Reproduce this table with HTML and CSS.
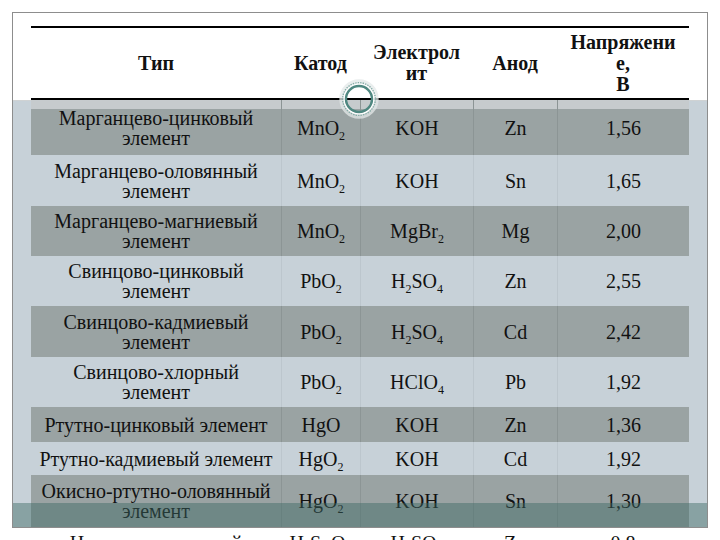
FILE: index.html
```html
<!DOCTYPE html>
<html lang="ru">
<head>
<meta charset="utf-8">
<title>Химические источники тока</title>
<link rel="stylesheet" href="styles.css">
</head>
<body>
<div class="slide">
  <table class="cells">
    <colgroup>
      <col class="c-type"><col class="c-cat"><col class="c-el"><col class="c-an"><col class="c-v">
    </colgroup>
    <thead>
      <tr>
        <th>Тип</th>
        <th>Катод</th>
        <th>Электрол<br>ит</th>
        <th>Анод</th>
        <th>Напряжени<br>е,<br>В</th>
      </tr>
    </thead>
    <tbody>
      <tr class="dark first h55"><td>Марганцево-цинковый<br>элемент</td><td>MnO<sub>2</sub></td><td>KOH</td><td>Zn</td><td>1,56</td></tr>
      <tr class="light h51"><td>Марганцево-оловянный<br>элемент</td><td>MnO<sub>2</sub></td><td>KOH</td><td>Sn</td><td>1,65</td></tr>
      <tr class="dark h50"><td>Марганцево-магниевый<br>элемент</td><td>MnO<sub>2</sub></td><td>MgBr<sub>2</sub></td><td>Mg</td><td>2,00</td></tr>
      <tr class="light h50"><td>Свинцово-цинковый<br>элемент</td><td>PbO<sub>2</sub></td><td>H<sub>2</sub>SO<sub>4</sub></td><td>Zn</td><td>2,55</td></tr>
      <tr class="dark h51"><td>Свинцово-кадмиевый<br>элемент</td><td>PbO<sub>2</sub></td><td>H<sub>2</sub>SO<sub>4</sub></td><td>Cd</td><td>2,42</td></tr>
      <tr class="light h50"><td>Свинцово-хлорный<br>элемент</td><td>PbO<sub>2</sub></td><td>HClO<sub>4</sub></td><td>Pb</td><td>1,92</td></tr>
      <tr class="dark h35"><td>Ртутно-цинковый элемент</td><td>HgO</td><td>KOH</td><td>Zn</td><td>1,36</td></tr>
      <tr class="light h33"><td>Ртутно-кадмиевый элемент</td><td>HgO<sub>2</sub></td><td>KOH</td><td>Cd</td><td>1,92</td></tr>
      <tr class="dark h52"><td>Окисно-ртутно-оловянный<br>элемент</td><td>HgO<sub>2</sub></td><td>KOH</td><td>Sn</td><td>1,30</td></tr>
      <tr class="out"><td>Никелево-цинковый<br>элемент</td><td>H<sub>2</sub>SnO<sub>3</sub></td><td>H<sub>2</sub>SO<sub>4</sub></td><td>Zn</td><td>0,8</td></tr>
    </tbody>
  </table>
  <svg class="ornament" width="40" height="40" viewBox="0 0 40 40" aria-hidden="true">
    <circle cx="20" cy="20" r="17.2" fill="none" stroke="#e3e8e8" stroke-width="5" opacity="0.75"/>
    <circle cx="20" cy="20" r="16.3" fill="none" stroke="#86aca7" stroke-width="1.5" stroke-dasharray="1.4 1.1"/>
    <circle cx="20" cy="20" r="14.8" fill="none" stroke="#ffffff" stroke-width="1.4"/>
    <circle cx="20" cy="20" r="13" fill="none" stroke="#4f8881" stroke-width="2.4"/>
  </svg>
  <div class="band"></div>
</div>
</body>
</html>
```

FILE: styles.css
```css
html, body {
  margin: 0;
  padding: 0;
  background: #ffffff;
  overflow: hidden;
  height: 540px;
}

body {
  font-family: "Liberation Serif", "Times New Roman", serif;
  color: #111111;
}

.slide {
  position: relative;
  box-sizing: border-box;
  margin: 12px 0 0 12px;
  width: 696px;
  height: 516px;
  border: 1px solid #8d8d8d;
  padding: 13px 18px 0 18px;
  background: linear-gradient(to bottom, #ffffff 0 87px, #cfd2d3 87px 88px, #c7d1d8 88px);
}

.cells {
  width: 658px;
  table-layout: fixed;
  border-collapse: separate;
  border-spacing: 0;
}

.c-type { width: 250px; }
.c-cat { width: 79px; }
.c-el { width: 113px; }
.c-an { width: 84px; }
.c-v { width: 132px; }

.cells th {
  height: 70px;
  padding: 0;
  font-size: 20px;
  line-height: 21px;
  font-weight: bold;
  text-align: center;
  vertical-align: middle;
  background: #ffffff;
  border-top: 2px solid #000000;
  border-bottom: 2px solid #000000;
}

.cells td {
  padding: 0;
  font-size: 20px;
  line-height: 20px;
  text-align: center;
  vertical-align: middle;
  white-space: nowrap;
}

.cells td + td {
  border-left: 1px solid rgba(0, 0, 0, 0.05);
}

.dark td {
  background: #9aa3a3;
}

.dark td + td {
  border-left: 1px solid #8c9595;
}

.first td {
  background: linear-gradient(to bottom, #c6cbcd 0 9px, #9aa3a3 9px);
}

.h55 td { height: 55px; }
.h52 td { height: 52px; }
.h51 td { height: 51px; }
.h50 td { height: 50px; }
.h35 td { height: 35px; }
.h33 td { height: 33px; }

.out td {
  height: 44px;
  vertical-align: top;
  padding-top: 6px;
}

.out td + td {
  border-left: none;
}

sub {
  font-size: 0.6em;
  line-height: 0;
  vertical-align: -0.4em;
}

.ornament {
  position: absolute;
  left: 326px;
  top: 66px;
}

.band {
  position: absolute;
  left: 0;
  right: 0;
  bottom: 0;
  height: 24px;
  background: rgba(60, 105, 100, 0.45);
}
```
